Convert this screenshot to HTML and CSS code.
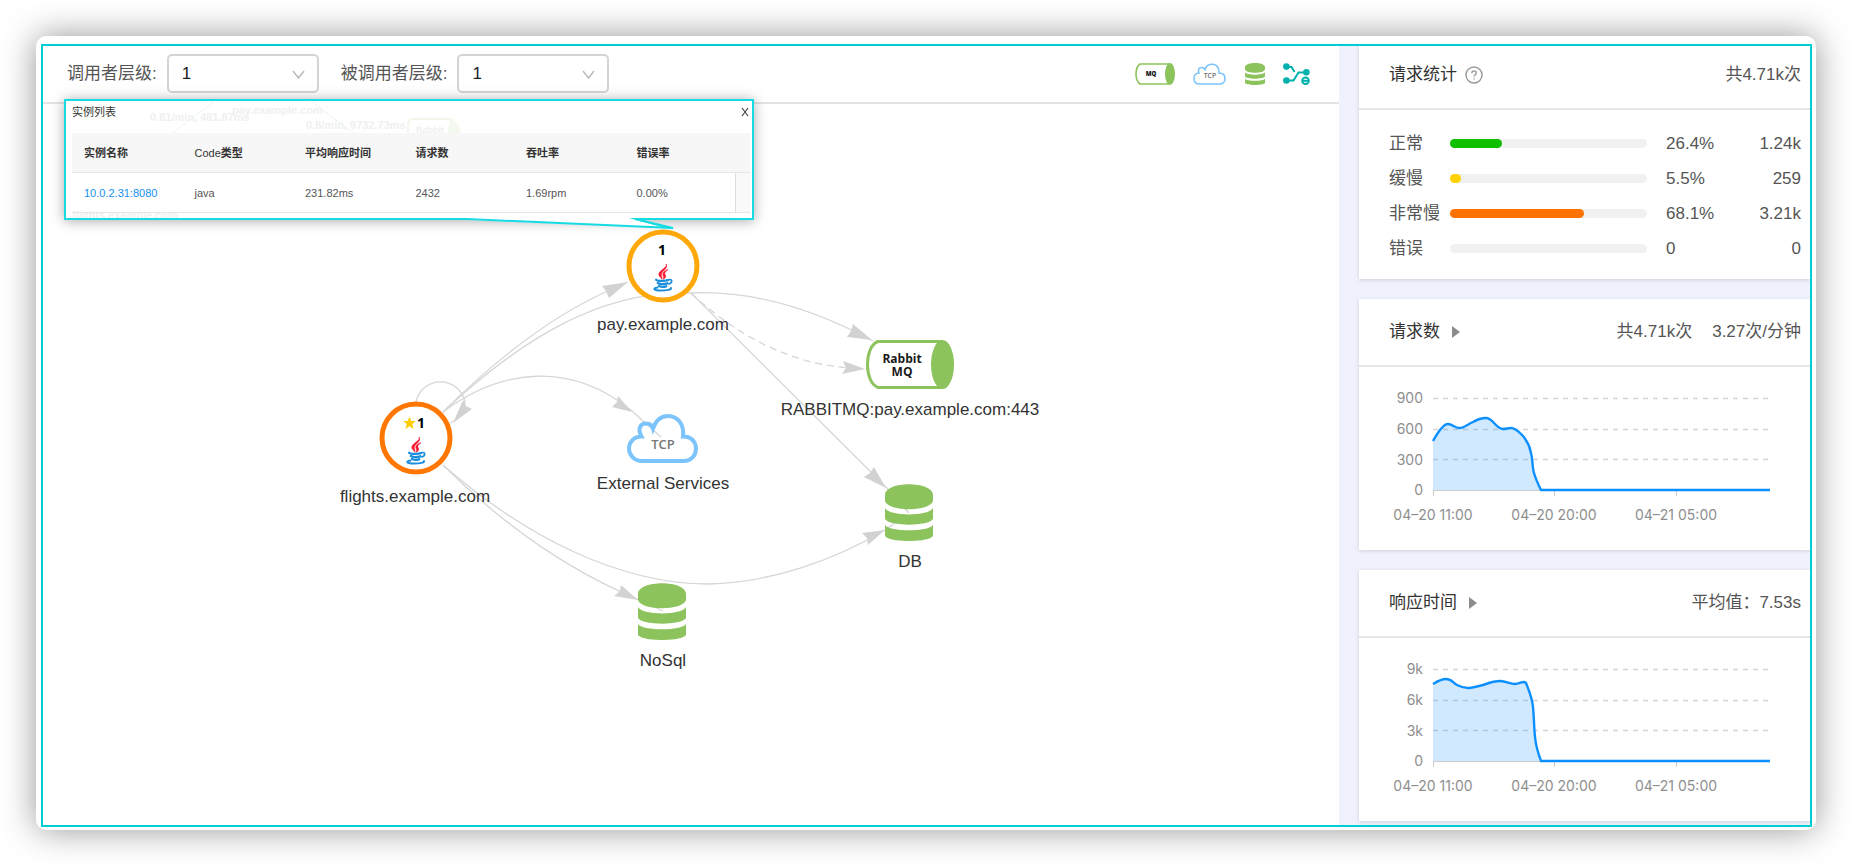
FILE: index.html
```html
<!DOCTYPE html>
<html lang="zh-CN">
<head>
<meta charset="utf-8">
<meta name="viewport" content="width=device-width, initial-scale=1">
<title>应用拓扑</title>
<link rel="stylesheet" href="styles.css">
</head>
<body>
<svg class="sprite" aria-hidden="true">
  <symbol id="db" viewBox="0 0 48 57" preserveAspectRatio="none">
    <path fill="#8dc35c" d="M0 11C0 -3.5 48 -3.5 48 11V17C45 28 3 28 0 17ZM0 24C4 32.5 44 32.5 48 24V35C44 42.5 4 42.5 0 35ZM0 41C4 48 44 48 48 41V52C44 58.7 4 58.7 0 52Z"/>
  </symbol>
  <symbol id="java" viewBox="0 0 20 28">
    <path fill="#f5132d" stroke="#f5132d" stroke-width=".6" d="M13.2 0C14.6 4 6 6.2 5.800 10.300C5.700 12.300 8 13.300 9.100 15.200C9.300 12.800 8 11.700 8.300 9.900C8.800 7 15.300 5 13.200 0ZM15 5.700C11.200 6.700 9.500 8.600 9.900 10.700C10.200 12 11.300 12.900 10.300 15.300C13.200 13.500 13 12 12 10.600C11 9 12.500 7.400 15 5.700Z"/>
    <g fill="none" stroke="#1b8fdc" stroke-linecap="round">
      <path stroke-width="2.300" d="M3.200 15.800C4 17 12 17.200 15 16.200M4.800 19C7 20.200 11.500 20.200 14.200 19.300M6 22C8 23 11.500 23 13.300 22.200"/>
      <path stroke-width="1.700" d="M15.800 15.600C19.400 14.800 20 18.600 15.600 20"/>
      <path stroke-width="2" d="M4.500 23.600C-1 24.600 1 26.400 8 26.500C14 26.500 18.500 25.600 18 24"/>
    </g>
  </symbol>
  <symbol id="cloud" viewBox="0 0 71 49">
    <path fill="none" stroke="#7cc4fb" stroke-width="4" d="M15 47C7 47 2 41 2 34.500C2 28 7 22.500 14.500 22.500C10.500 15 13 9.500 19 9.500C22 9.500 25 11 26 14.500C29 6 34 2 41 2C51 2 57.500 11 56 22.500C64 22 69 28 69 34.500C69 41.500 64 47 57 47Z"/>
  </symbol>
  <symbol id="cylinder" viewBox="0 0 88 49">
    <path fill="none" stroke="#8dc35c" stroke-width="3" d="M76 1.500H12C5 4 1.500 14 1.500 24.500S5 45 12 47.500H76"/>
    <ellipse fill="#8dc35c" cx="76.500" cy="24.500" rx="11.500" ry="24.500"/>
  </symbol>
</svg>

<div class="frame">
  <div class="app">
    <main class="main">
      <header class="toolbar">
        <label class="field-label" for="caller">调用者层级:</label>
        <span class="picker">
          <select id="caller"><option>1</option><option>2</option><option>3</option></select>
          <svg class="chevron" viewBox="0 0 13 9" aria-hidden="true"><path d="M1 1L6.500 8L12 1"/></svg>
        </span>
        <label class="field-label" for="callee">被调用者层级:</label>
        <span class="picker">
          <select id="callee"><option>1</option><option>2</option><option>3</option></select>
          <svg class="chevron" viewBox="0 0 13 9" aria-hidden="true"><path d="M1 1L6.500 8L12 1"/></svg>
        </span>
        <div class="tools">
          <button type="button" class="tool" aria-label="消息队列">
            <svg width="40" height="22" viewBox="0 0 40 22">
              <path fill="none" stroke="#8dc35c" stroke-width="1.600" d="M34 1H5C2.300 3 1 7 1 11S2.300 19 5 21H34"/>
              <ellipse fill="#8dc35c" cx="35" cy="11" rx="5" ry="11"/>
              <text class="mq-small" x="16" y="13">MQ</text>
            </svg>
          </button>
          <button type="button" class="tool" aria-label="外部服务">
            <svg width="34" height="22" viewBox="0 0 34 22">
              <path fill="none" stroke="#7cc4fb" stroke-width="1.600" d="M7 21C3 21 1 18.500 1 15.500C1 12.500 3 10 6 10C4.500 7 6 4.500 8.500 4.500C10 4.500 11 5 12 6.500C13 3 16 1.200 19 1.200C24 1.200 26.500 5 26 10C30 10 32 12.500 32 15.500C32 18.500 30 21 26.500 21Z"/>
              <text class="tcp-small" x="17" y="15">TCP</text>
            </svg>
          </button>
          <button type="button" class="tool" aria-label="数据库">
            <svg width="20" height="22"><use href="#db" width="20" height="22"/></svg>
          </button>
          <button type="button" class="tool" aria-label="拓扑布局">
            <svg width="27" height="22" viewBox="0 0 27 22">
              <g fill="none" stroke="#00b2ab" stroke-width="2">
                <path d="M4 4H8.500L11.500 9M4 17.500H10.500L15.500 9.500H22"/>
                <circle cx="22.500" cy="17.800" r="3.300"/><path d="M19 17.800H26"/>
              </g>
              <g fill="#00b2ab"><circle cx="3.400" cy="3.600" r="3.300"/><circle cx="3.400" cy="17.500" r="3.300"/><circle cx="23.400" cy="9.300" r="3.300"/></g>
            </svg>
          </button>
        </div>
      </header>

      <section class="canvas" aria-label="调用拓扑">
        <svg class="graph" viewBox="43 104 1296 721">
          <g class="edges">
            <path d="M443 412Q530 325 612 289L628 282"/>
            <path d="M443 412C520 340 600 290 690 293C750 290 810 307 873 341"/>
            <path d="M443 412C500 369 570 360 632 411L661 437"/>
            <path d="M416 402A25 25 0 0 1 465 402Q462 419 450 423"/>
            <path d="M691 293L886 487L909 513"/>
            <path class="dashed" d="M691 293Q765 362 850 368"/>
            <path d="M443 465Q533 555 637 599L663 611"/>
            <path d="M443 465C525 537 620 584 708 584C770 583 835 560 885 530L895 523"/>
          </g>
          <g class="arrows">
            <path d="M628 282L602 286L606 291L609 298Z"/>
            <path d="M872 340L853 324L851 331L847 337Z"/>
            <path d="M632 412L618 396L617 402L612 407Z"/>
            <path d="M453 423L463 400L466 406L472 409Z"/>
            <path d="M886 488L874 467L870 473L864 477Z"/>
            <path d="M865 369L843 361L846 368L842 374Z"/>
            <path d="M638 600L621 585L620 591L614 596Z"/>
            <path d="M885 530L862 533L867 538L868 545Z"/>
          </g>
          <g class="node-body">
            <use href="#cylinder" x="866" y="340" width="88" height="49"/>
            <text class="mq" x="902" y="363">Rabbit</text>
            <text class="mq" x="902" y="376">MQ</text>
            <use href="#cloud" x="627" y="414" width="71" height="49"/>
            <text class="tcp" x="663" y="449">TCP</text>
            <use href="#db" x="885" y="484" width="48" height="57"/>
            <use href="#db" x="638" y="583" width="48" height="57"/>
          </g>
          <g class="instances">
            <circle cx="663" cy="266" r="34" stroke="#ffa80a"/>
            <circle cx="416" cy="438" r="34" stroke="#ff7600"/>
          </g>
          <text class="count" x="662" y="255">1</text>
          <use href="#java" x="653" y="264" width="20" height="28"/>
          <path fill="#fc0" d="M409.500 416.500L411.200 421H416L412.200 424L413.600 429L409.500 426.200L405.400 429L406.800 424L403 421H407.800Z"/>
          <text class="count" x="421" y="428">1</text>
          <use href="#java" x="406" y="437" width="20" height="28"/>
          <g class="node-names">
            <text x="663" y="330">pay.example.com</text>
            <text x="415" y="502">flights.example.com</text>
            <text x="910" y="415">RABBITMQ:pay.example.com:443</text>
            <text x="663" y="489">External Services</text>
            <text x="910" y="567">DB</text>
            <text x="663" y="666">NoSql</text>
          </g>
        </svg>

        <section class="popup" aria-label="实例列表">
          <svg class="ghost" viewBox="0 0 686 117" aria-hidden="true">
            <text x="84" y="20">0.81/min, 481.87ms</text>
            <text x="166" y="13">pay.example.com</text>
            <text x="240" y="28">0.8/min, 9732.73ms</text>
            <text x="350" y="32" class="ghost-light">Rabbit</text>
            <text x="6" y="118">flights.example.com</text>
            <path d="M149 0L104 34M245 0L290 34" stroke="#eaf5f3"/>
            <rect x="342" y="18" width="46" height="40" rx="5" fill="none" stroke="#f1f8ea" stroke-width="2"/>
            <path d="M384 18Q398 24 394 40H380Z" fill="#f3f9ee"/>
          </svg>
          <div class="popup-head">
            <h2>实例列表</h2>
            <button type="button" class="close" aria-label="关闭">
              <svg width="8" height="10" viewBox="0 0 8 10"><path d="M1 1L7 9M7 1L1 9"/></svg>
            </button>
          </div>
          <table class="instances-table">
            <colgroup><col><col><col><col><col><col><col class="gutter"></colgroup>
            <thead>
              <tr><th>实例名称</th><th><span class="latin">Code</span>类型</th><th>平均响应时间</th><th>请求数</th><th>吞吐率</th><th>错误率</th><td class="gutter-head"></td></tr>
            </thead>
            <tbody>
              <tr><td><a href="#instance">10.0.2.31:8080</a></td><td>java</td><td>231.82ms</td><td>2432</td><td>1.69rpm</td><td>0.00%</td><td class="gutter-cell"></td></tr>
            </tbody>
          </table>
          <svg class="tail" width="212" height="14" viewBox="0 0 212 14" aria-hidden="true">
            <path class="tail-fill" d="M1 0H168V3L206 11L1 3Z"/>
            <path class="tail-line" d="M0 2L206 11L168 2"/>
            <path class="tail-cap" d="M162 1H175V3L207 11.500H200Z"/>
          </svg>
        </section>
      </section>
    </main>

    <aside class="side">
      <section class="card">
        <header class="card-head">
          <h3>请求统计</h3>
          <button type="button" class="help" aria-label="帮助">
            <svg width="18" height="18" viewBox="0 0 18 18"><circle cx="9" cy="9" r="8"/><path d="M6.800 7.300C6.800 4 11.300 4.200 11.300 7C11.300 8.800 9 8.700 9 10.600M9 12.200V13.400"/></svg>
          </button>
          <p class="totals"><span>共4.71k次</span></p>
        </header>
        <div class="stats">
          <span>正常</span><div class="bar"><div class="fill ok" style="width:26.4%"></div></div><span class="pct">26.4%</span><span class="num">1.24k</span>
          <span>缓慢</span><div class="bar"><div class="fill slow" style="width:5.5%"></div></div><span class="pct">5.5%</span><span class="num">259</span>
          <span>非常慢</span><div class="bar"><div class="fill very-slow" style="width:68.1%"></div></div><span class="pct">68.1%</span><span class="num">3.21k</span>
          <span>错误</span><div class="bar"></div><span class="pct">0</span><span class="num">0</span>
        </div>
      </section>

      <section class="card">
        <header class="card-head">
          <h3>请求数</h3>
          <button type="button" class="expand" aria-label="展开请求数"><svg width="8" height="12" viewBox="0 0 8 12"><path d="M0 0L8 6L0 12Z"/></svg></button>
          <p class="totals"><span>共4.71k次</span><span>3.27次/分钟</span></p>
        </header>
        <svg class="chart" viewBox="0 -1 451 183">
          <path class="grid" d="M74 30.500H411M74 61.500H411M74 91.500H411"/>
          <path class="axis" d="M74 122.500H411M74.500 122V128M195.500 122V128M317.500 122V128"/>
          <path class="area" d="M74 73C79 64 84 56 89 56C93 56 96 60 100 60C105 60 109 56 114 54C119 51 123 50 127 50C134 50 137 61 144 61C147 61 149 60 152 60C157 60 160 64 164 68C168 73 171 79 172 85C174 92 173 99 175 105C177 112 179 116 182 122H74Z"/>
          <path class="line" d="M74 73C79 64 84 56 89 56C93 56 96 60 100 60C105 60 109 56 114 54C119 51 123 50 127 50C134 50 137 61 144 61C147 61 149 60 152 60C157 60 160 64 164 68C168 73 171 79 172 85C174 92 173 99 175 105C177 112 179 116 182 122H411"/>
          <g class="y-labels"><text x="64" y="35">900</text><text x="64" y="66">600</text><text x="64" y="97">300</text><text x="64" y="127">0</text></g>
          <g class="x-labels"><text x="74" y="152">04–20 11:00</text><text x="195" y="152">04–20 20:00</text><text x="317" y="152">04–21 05:00</text></g>
        </svg>
      </section>

      <section class="card">
        <header class="card-head">
          <h3>响应时间</h3>
          <button type="button" class="expand" aria-label="展开响应时间"><svg width="8" height="12" viewBox="0 0 8 12"><path d="M0 0L8 6L0 12Z"/></svg></button>
          <p class="totals"><span>平均值：7.53s</span></p>
        </header>
        <svg class="chart" viewBox="0 -1 451 183">
          <path class="grid" d="M74 30.500H411M74 61.500H411M74 91.500H411"/>
          <path class="axis" d="M74 122.500H411M74.500 122V128M195.500 122V128M317.500 122V128"/>
          <path class="area" d="M74 45C79 42 82 40 87 40C93 40 94 44 98 46C102 48 105 49 109 49C114 49 119 47 124 46C130 44 135 42 141 42C147 42 151 45 156 45C161 45 165 41 167 44C170 52 173 58 174 68C175 78 175 88 176 98C177 108 179 114 182 122H74Z"/>
          <path class="line" d="M74 45C79 42 82 40 87 40C93 40 94 44 98 46C102 48 105 49 109 49C114 49 119 47 124 46C130 44 135 42 141 42C147 42 151 45 156 45C161 45 165 41 167 44C170 52 173 58 174 68C175 78 175 88 176 98C177 108 179 114 182 122H411"/>
          <g class="y-labels"><text x="64" y="35">9k</text><text x="64" y="66">6k</text><text x="64" y="97">3k</text><text x="64" y="127">0</text></g>
          <g class="x-labels"><text x="74" y="152">04–20 11:00</text><text x="195" y="152">04–20 20:00</text><text x="317" y="152">04–21 05:00</text></g>
        </svg>
      </section>
    </aside>
  </div>
</div>
</body>
</html>
```

FILE: styles.css
```css
* { box-sizing: border-box; }

body {
  display: flow-root;
  margin: 0;
  background: #fff;
  color: #555;
  font: 17px/24px "Liberation Sans", "Noto Sans CJK SC", sans-serif;
}

h2, h3, p { margin: 0; font-weight: 400; }
button { padding: 0; border: 0; background: none; cursor: pointer; }
svg { display: block; }
.sprite { position: absolute; width: 0; height: 0; }

.frame {
  margin: 36px;
  padding: 8px 4px 3px 5px;
  border-radius: 10px;
  background: #fff;
  box-shadow: 0 0 34px rgba(0, 0, 0, .42);
}

.app {
  display: flex;
  border: 2px solid #00cdd4;
}

.main {
  flex: 1;
  min-width: 0;
  background: #fff;
}

/* toolbar */
.toolbar {
  display: flex;
  align-items: center;
  height: 58px;
  padding: 0 29px 1px 24px;
  border-bottom: 2px solid #e4e4e4;
}

.field-label { margin-right: 10px; }
.picker { position: relative; width: 152px; margin-right: 22px; }

.picker select {
  display: block;
  width: 100%;
  height: 39px;
  padding: 0 34px 0 13px;
  border: 2px solid #d4d4d4;
  border-radius: 5px;
  background: #fff;
  color: #222;
  font: inherit;
  appearance: none;
}

.chevron {
  position: absolute;
  top: 16px;
  right: 14px;
  width: 13px;
  pointer-events: none;
  fill: none;
  stroke: #bbb;
  stroke-width: 1.5;
}

.tools { display: flex; align-items: center; gap: 18px; margin-left: auto; }
.mq-small, .tcp-small { text-anchor: middle; font-family: "Open Sans", sans-serif; }
.mq-small { font-size: 6px; font-weight: 800; fill: #111; }
.tcp-small { font-size: 7px; fill: #444; }

/* topology */
.canvas { position: relative; }
.graph { width: 100%; }
.graph text { text-anchor: middle; }
.edges path { fill: none; stroke: #d6d6d6; stroke-width: 1.3; }
.edges .dashed { stroke-dasharray: 7 5; }
.arrows path { fill: #d2d2d2; }
.instances circle { fill: #fff; stroke-width: 5; }
.node-names { font-size: 17px; fill: #333; }
.mq, .tcp, .count { font-family: "Open Sans", sans-serif; }
.mq { font-size: 12px; font-weight: 700; fill: #1a1a1a; }
.tcp { font-size: 13px; font-weight: 600; fill: #777; }
.count { font-size: 14px; font-weight: 700; fill: #000; }

/* instance popup */
.popup {
  position: absolute;
  top: -5px;
  left: 21px;
  width: 690px;
  padding: 0 2px 5px 6px;
  border: 2px solid #16dbe3;
  background: #fff;
  box-shadow: 0 1px 12px rgba(0, 0, 0, .34);
  font-size: 11px;
  line-height: 16px;
}

.ghost {
  position: absolute;
  inset: 0;
  font-size: 11px;
  font-weight: 700;
  fill: #f0f0f0;
}
.ghost-light { font-size: 9px; }

.popup-head {
  position: relative;
  display: flex;
  align-items: center;
  height: 22px;
  margin-bottom: 10px;
}
.popup-head h2 { flex: 1; color: #333; font-size: 11px; }
.close { margin-right: 1px; }
.close path { fill: none; stroke: #444; stroke-width: 1.2; }

.instances-table {
  position: relative;
  width: 100%;
  border-collapse: separate;
  border-spacing: 0;
  table-layout: fixed;
}
.instances-table .gutter { width: 15px; }
.instances-table th,
.instances-table td {
  height: 40px;
  padding: 0 0 0 12px;
  border-bottom: 1px solid #e6e6e6;
  text-align: left;
}
.instances-table th,
.instances-table .gutter-head { background: #f7f7f7; color: #333; }
.instances-table .latin { font-weight: 400; }
.instances-table a { color: #1290f0; text-decoration: none; }
.instances-table .gutter-cell {
  padding: 0;
  border-left: 1px solid #ddd;
  background: #f9f9f9;
}
.instances-table .gutter-head { padding: 0; }

.tail { position: absolute; top: 116px; left: 401px; }
.tail-fill { fill: #fff; }
.tail-line { fill: none; stroke: #16dbe3; stroke-width: 2; }
.tail-cap { fill: #16dbe3; }

/* statistics column */
.side {
  display: flex;
  flex: 0 0 471px;
  flex-direction: column;
  gap: 20px;
  padding: 0 0 4px 20px;
  overflow: hidden;
  background: #eff2fd;
}

.card {
  background: #fff;
  box-shadow: 0 1px 4px rgba(0, 0, 0, .14);
}
.card:first-child { margin-top: -4px; }

.card-head {
  display: flex;
  align-items: center;
  height: 68px;
  padding: 0 9px 1px 30px;
  border-bottom: 2px solid #e6e6e6;
}
.card-head h3 { color: #333; font-size: 17px; }
.totals { display: flex; gap: 20px; margin-left: auto; }
.help { margin-left: 8px; }
.help svg { fill: none; stroke: #999; stroke-width: 1.4; }
.expand { margin-left: 12px; }
.expand path { fill: #8c8c8c; }

.stats {
  display: grid;
  grid-template-columns: 61px 1fr 85px 69px;
  grid-auto-rows: 35px;
  align-items: center;
  padding: 16px 9px 13px 30px;
}
.bar { height: 9px; border-radius: 5px; background: #f1f1f1; }
.fill { height: 100%; border-radius: 5px; }
.ok { background: #0fc000; }
.slow { background: #ffd200; }
.very-slow { background: #ff7200; }
.pct { padding-left: 19px; }
.num { text-align: right; }

.chart { width: 100%; font: 14px Inter, sans-serif; fill: #8e8e8e; }
.grid { stroke: #d4d4d4; stroke-width: 1.3; stroke-dasharray: 5 5; }
.axis { fill: none; stroke: #ccc; }
.area { fill: #1890ff; fill-opacity: .2; }
.line { fill: none; stroke: #0c8fff; stroke-width: 2.4; }
.y-labels { text-anchor: end; }
.x-labels { text-anchor: middle; }
```
